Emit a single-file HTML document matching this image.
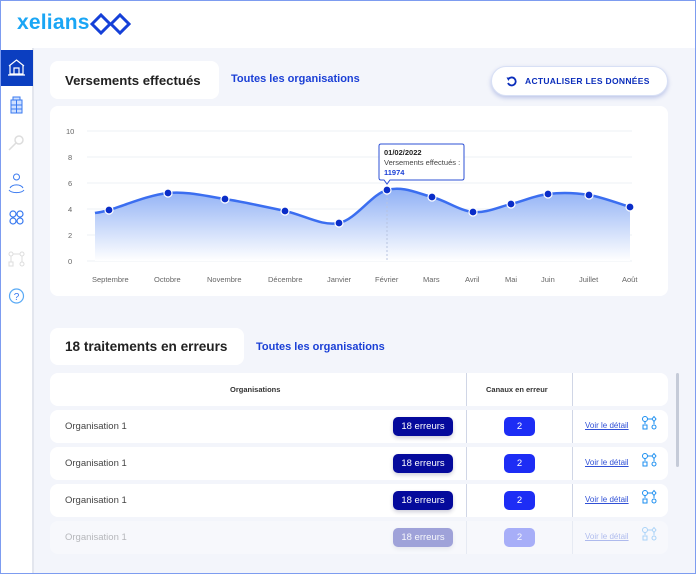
<!DOCTYPE html>
<html><head><meta charset="utf-8"><style>
*{box-sizing:border-box;margin:0;padding:0}
body{width:696px;height:574px;overflow:hidden;font-family:"Liberation Sans",sans-serif;background:#f3f5fb;position:relative}
.frame{position:absolute;inset:0;border:1px solid #7d9cf0;pointer-events:none;z-index:10}
.top{position:absolute;left:0;top:0;width:696px;height:48px;background:#fff}
.logo{position:absolute;left:17px;top:11px;font-size:21px;font-weight:bold;color:#1aa6f5;letter-spacing:0.2px}
.side{position:absolute;left:0;top:48px;width:34px;height:526px;background:#fff;border-right:2px solid #e3e6ee}
.act{position:absolute;left:0;top:50px;width:33px;height:36px;background:#0b3ec0}
.card{position:absolute;background:#fff;border-radius:8px}
.abs{position:absolute}
.link{color:#1a3fd6;font-weight:bold;font-size:11px}
.ax{position:absolute;font-size:7.5px;color:#666}
.row .nm{position:absolute;left:15px;top:11px;font-size:9.5px;color:#444}
.b1{position:absolute;left:343px;top:7px;width:60px;height:19px;background:#050a9c;border-radius:5px;color:#fff;font-size:9.5px;text-align:center;line-height:19px;box-shadow:0 2px 4px rgba(0,0,60,.2)}
.b2{position:absolute;left:454px;top:7px;width:31px;height:19px;background:#1d2df5;border-radius:5px;color:#fff;font-size:9.5px;text-align:center;line-height:19px}
.vd{position:absolute;left:535px;top:11px;font-size:8px;color:#3050d6;text-decoration:underline}
.vl{position:absolute;top:0;bottom:0;width:1px;background:#d0d6e6}
</style></head><body>
<div class="top"><div class="logo">xelians</div>
<svg class="abs" style="left:90px;top:13px" width="42" height="22" viewBox="0 0 42 22"><path d="M2 11 L11 2 L20 11 L11 20 Z M21 11 L30 2 L39 11 L30 20 Z" fill="none" stroke="#1540d8" stroke-width="3" stroke-linejoin="miter"/></svg>
</div>
<div class="side"></div>
<div class="act"></div>
<svg class="abs" style="left:0;top:48px" width="33" height="270">
<g fill="none" stroke="#fff" stroke-width="1.2"><path d="M9 18 L16.5 12 L24 18 M10 17 V26 H23 V17 M14 26 V20 H19 V26 M8 27 H25"/></g>
<g stroke="#3a7af0" fill="#cfe0ff" stroke-width="1"><rect x="11" y="52" width="11" height="13"/><rect x="13" y="49" width="7" height="3"/><path d="M11 57 H22 M11 61 H22 M16.5 52 V65" fill="none"/></g>
<g stroke="#ddd" fill="none" stroke-width="1.5"><circle cx="19" cy="92" r="4"/><path d="M16 95 L9 102"/></g>
<g stroke="#3a7af0" fill="none" stroke-width="1"><circle cx="16.5" cy="129" r="3"/><path d="M10 140 a7 5 0 0 1 13 0 M9 142 a8 4 0 0 0 15 0"/></g>
<g stroke="#3a7af0" fill="none" stroke-width="1.2"><circle cx="13" cy="166" r="3"/><circle cx="20" cy="166" r="3"/><circle cx="13" cy="173" r="3"/><circle cx="20" cy="173" r="3"/></g>
<g stroke="#ddd" fill="none" stroke-width="1"><circle cx="11" cy="206" r="2"/><circle cx="22" cy="206" r="2"/><rect x="9" y="214" width="4" height="4"/><circle cx="22" cy="216" r="2"/><path d="M13 206 H20 M11 208 V214 M22 208 V214"/></g>
<g stroke="#5aaaf5" fill="none" stroke-width="1.2"><circle cx="16.5" cy="248" r="7"/></g>
<text x="16.5" y="252" font-size="10" fill="#3a7af0" text-anchor="middle" font-family="Liberation Sans">?</text>
</svg>

<div class="card" style="left:50px;top:61px;width:169px;height:38px"><div class="abs" style="left:15px;top:12px;font-size:13.2px;font-weight:bold;color:#222">Versements effectués</div></div>
<div class="abs link" style="left:231px;top:73px">Toutes les organisations</div>
<div class="abs" style="left:491px;top:66px;width:177px;height:30px;background:#fff;border-radius:15px;box-shadow:0 2px 4px rgba(30,60,180,.25);border:1px solid #d8e0f5">
<svg class="abs" style="left:14px;top:9px" width="11" height="11" viewBox="0 0 11 11"><path d="M2.5 3 A4 4 0 1 1 2 7" fill="none" stroke="#0a2dbb" stroke-width="1.8"/><path d="M0.5 1.5 L4 1.5 L2.5 5 Z" fill="#0a2dbb"/></svg>
<div class="abs" style="left:33px;top:9px;font-size:8.5px;font-weight:bold;color:#0a2dbb;letter-spacing:.3px">ACTUALISER LES DONNÉES</div></div>

<div class="card" style="left:50px;top:106px;width:618px;height:190px"></div>
<svg class="abs" style="left:0;top:0" width="696" height="300">
<defs><linearGradient id="g" x1="0" y1="0" x2="0" y2="1"><stop offset="0" stop-color="#8fb0f5"/><stop offset="1" stop-color="#fff"/></linearGradient></defs>
<g stroke="#eef0f5"><path d="M87 131H632M87 157H632M87 183H632M87 209H632M87 235H632M87 261H632"/></g>
<path d="M95 213 C97 212.5 97 213.3 109 210 C121.2 206.7 148.7 194.8 168 193 C187.3 191.2 205.5 196 225 199 C244.5 202 266 207 285 211 C304 215 322 226.5 339 223 C356 219.5 371.5 194.3 387 190 C402.5 185.7 417.7 193.3 432 197 C446.3 200.7 459.8 210.8 473 212 C486.2 213.2 498.5 207 511 204 C523.5 201 535 195.5 548 194 C561 192.5 575.3 192.8 589 195 C602.7 197.2 623 205 630 207 L630 261 L95 261 Z" fill="url(#g)"/>
<path d="M95 213 C97 212.5 97 213.3 109 210 C121.2 206.7 148.7 194.8 168 193 C187.3 191.2 205.5 196 225 199 C244.5 202 266 207 285 211 C304 215 322 226.5 339 223 C356 219.5 371.5 194.3 387 190 C402.5 185.7 417.7 193.3 432 197 C446.3 200.7 459.8 210.8 473 212 C486.2 213.2 498.5 207 511 204 C523.5 201 535 195.5 548 194 C561 192.5 575.3 192.8 589 195 C602.7 197.2 623 205 630 207" fill="none" stroke="#3b6ef0" stroke-width="2.5"/>
<path d="M387 190V261" stroke="#b8c4e0" stroke-dasharray="2 2"/>
<g fill="#0a2dc8" stroke="#fff" stroke-width="1.2">
<circle cx="109" cy="210" r="4"/><circle cx="168" cy="193" r="4"/><circle cx="225" cy="199" r="4"/><circle cx="285" cy="211" r="4"/><circle cx="339" cy="223" r="4"/><circle cx="387" cy="190" r="4"/><circle cx="432" cy="197" r="4"/><circle cx="473" cy="212" r="4"/><circle cx="511" cy="204" r="4"/><circle cx="548" cy="194" r="4"/><circle cx="589" cy="195" r="4"/><circle cx="630" cy="207" r="4"/></g>
<path d="M381 144 H462 Q464 144 464 146 V178 Q464 180 462 180 H390 L387 184 L384 180 H381 Q379 180 379 178 V146 Q379 144 381 144 Z" fill="#fff" stroke="#2d50d6"/>
<text x="384" y="155" font-size="7.5" font-weight="bold" fill="#222" font-family="Liberation Sans">01/02/2022</text>
<text x="384" y="165" font-size="7.5" fill="#444" font-family="Liberation Sans">Versements effectués :</text>
<text x="384" y="175" font-size="7.5" font-weight="bold" fill="#1a3fd6" font-family="Liberation Sans">11974</text>
</svg>
<div class="ax" style="left:66px;top:127px">10</div><div class="ax" style="left:68px;top:153px">8</div><div class="ax" style="left:68px;top:179px">6</div><div class="ax" style="left:68px;top:205px">4</div><div class="ax" style="left:68px;top:231px">2</div><div class="ax" style="left:68px;top:257px">0</div>
<div class="ax" style="left:92px;top:275px">Septembre</div><div class="ax" style="left:154px;top:275px">Octobre</div><div class="ax" style="left:207px;top:275px">Novembre</div><div class="ax" style="left:268px;top:275px">Décembre</div><div class="ax" style="left:327px;top:275px">Janvier</div><div class="ax" style="left:375px;top:275px">Février</div><div class="ax" style="left:423px;top:275px">Mars</div><div class="ax" style="left:465px;top:275px">Avril</div><div class="ax" style="left:505px;top:275px">Mai</div><div class="ax" style="left:541px;top:275px">Juin</div><div class="ax" style="left:579px;top:275px">Juillet</div><div class="ax" style="left:622px;top:275px">Août</div>

<div class="card" style="left:50px;top:328px;width:194px;height:37px"><div class="abs" style="left:15px;top:11px;font-size:13.6px;font-weight:bold;color:#222">18 traitements en erreurs</div></div>
<div class="abs link" style="left:256px;top:341px">Toutes les organisations</div>

<div class="card" style="left:50px;top:373px;width:618px;height:33px">
<div class="abs" style="left:180px;top:12px;font-size:7.5px;font-weight:bold;color:#333">Organisations</div>
<div class="abs" style="left:436px;top:12px;font-size:7.5px;font-weight:bold;color:#333">Canaux en erreur</div>
<div class="vl" style="left:416px"></div><div class="vl" style="left:522px"></div></div>

<div class="card row" style="left:50px;top:410px;width:618px;height:33px"><div class="nm">Organisation 1</div><div class="b1">18 erreurs</div><div class="b2">2</div><div class="vd">Voir le détail</div><div class="vl" style="left:416px"></div><div class="vl" style="left:522px"></div></div>
<div class="card row" style="left:50px;top:447px;width:618px;height:33px"><div class="nm">Organisation 1</div><div class="b1">18 erreurs</div><div class="b2">2</div><div class="vd">Voir le détail</div><div class="vl" style="left:416px"></div><div class="vl" style="left:522px"></div></div>
<div class="card row" style="left:50px;top:484px;width:618px;height:33px"><div class="nm">Organisation 1</div><div class="b1">18 erreurs</div><div class="b2">2</div><div class="vd">Voir le détail</div><div class="vl" style="left:416px"></div><div class="vl" style="left:522px"></div></div>
<div class="card row" style="left:50px;top:521px;width:618px;height:33px;opacity:.35"><div class="nm">Organisation 1</div><div class="b1">18 erreurs</div><div class="b2">2</div><div class="vd">Voir le détail</div><div class="vl" style="left:416px"></div><div class="vl" style="left:522px"></div></div>
<svg class="abs" style="left:640px;top:410px" width="20" height="150">
<g fill="none" stroke="#1a8ef0" stroke-width="1">
<g><circle cx="5" cy="9" r="2.5"/><path d="M7.5 9H12"/><path d="M14 6.5 L16 9 L14 11.5 L12 9Z"/><path d="M5 11.5V14M14 11.5V14"/><rect x="3" y="15" width="4" height="4"/><circle cx="14" cy="17" r="2"/></g>
<g transform="translate(0,37)"><circle cx="5" cy="9" r="2.5"/><path d="M7.5 9H12"/><path d="M14 6.5 L16 9 L14 11.5 L12 9Z"/><path d="M5 11.5V14M14 11.5V14"/><rect x="3" y="15" width="4" height="4"/><circle cx="14" cy="17" r="2"/></g>
<g transform="translate(0,74)"><circle cx="5" cy="9" r="2.5"/><path d="M7.5 9H12"/><path d="M14 6.5 L16 9 L14 11.5 L12 9Z"/><path d="M5 11.5V14M14 11.5V14"/><rect x="3" y="15" width="4" height="4"/><circle cx="14" cy="17" r="2"/></g>
<g transform="translate(0,111)" opacity=".35"><circle cx="5" cy="9" r="2.5"/><path d="M7.5 9H12"/><path d="M14 6.5 L16 9 L14 11.5 L12 9Z"/><path d="M5 11.5V14M14 11.5V14"/><rect x="3" y="15" width="4" height="4"/><circle cx="14" cy="17" r="2"/></g>
</g></svg>
<div class="abs" style="left:676px;top:373px;width:3px;height:94px;background:#c5cbd8;border-radius:2px"></div>
<div class="frame"></div>
</body></html>
